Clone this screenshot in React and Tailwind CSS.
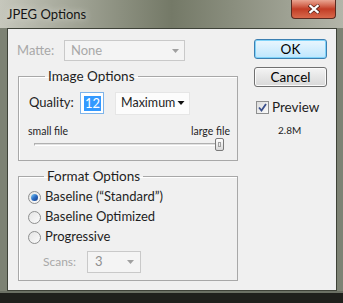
import React from "react";

const font = { fontFamily: 'Lato, "Noto Sans", Arial, sans-serif' };

function Arrow({ color = "#8a8a8a", w = 7 }) {
  return (
    <svg width={w} height="4" viewBox="0 0 7 4">
      <path d="M0 0 L7 0 L3.5 4 Z" fill={color} />
    </svg>
  );
}

function Radio({ checked }) {
  return (
    <span className="w-[13px] h-[13px] rounded-full border border-[#8e8f8f] bg-gradient-to-br from-[#e4e4e4] to-[#fbfbfb] flex items-center justify-center shrink-0">
      {checked && (
        <span className="w-[7px] h-[7px] rounded-full bg-gradient-to-br from-[#8ad4f5] via-[#2c6dc5] to-[#153d84]" />
      )}
    </span>
  );
}

function Legend({ children }) {
  return (
    <legend className="ml-[16px] px-[3px] text-[13.5px] leading-[16px] text-[#1e1e1e]">
      {children}
    </legend>
  );
}

export default function App() {
  return (
    <div
      className="w-[343px] h-[303px] flex flex-col overflow-hidden bg-[#7d8274]"
      style={font}
    >
      {/* title bar */}
      <div className="h-[28px] flex items-start bg-gradient-to-r from-[#c6c7bc] via-[#747967] to-[#b3b5a9]">
        <span className="pl-[7px] pt-[4px] text-[13px] leading-[20px] text-[#151515] [text-shadow:0_0_6px_#e6e6de]">
          JPEG Options
        </span>
        <div className="ml-auto mr-[7px] w-[45px] h-[19px] rounded-b-[4px] border border-t-0 border-[#5a2a20] bg-gradient-to-b from-[#e9a592] via-[#c23c25] to-[#d8684b] flex items-center justify-center">
          <svg width="12" height="10" viewBox="0 0 12 10">
            <path d="M1 1 L11 9 M11 1 L1 9" stroke="#4a1a10" strokeWidth="3.6" />
            <path d="M1.5 1.2 L10.5 8.8 M10.5 1.2 L1.5 8.8" stroke="#ffffff" strokeWidth="2.2" />
          </svg>
        </div>
      </div>

      {/* client area */}
      <div className="flex-1 flex pl-[7px] pr-[6px]">
        <div className="flex-1 flex border border-[#3e4238] bg-[#f0f0f0] text-[#1e1e1e]">
          {/* left column */}
          <div className="w-[230px] pl-[10px] pt-[11px] flex flex-col">
            <div className="flex items-center h-[21px] -ml-[1px]">
              <span className="w-[47px] text-[13px] text-[#a8a8a8]">Matte:</span>
              <div className="w-[121px] h-[21px] border border-[#c9c9c9] bg-[#f4f4f4] flex items-center pl-[6px] pr-[5px]">
                <span className="text-[13px] text-[#a8a8a8]">None</span>
                <span className="ml-auto flex items-center">
                  <Arrow color="#a0a0a0" />
                </span>
              </div>
            </div>

            <fieldset className="mt-[7px] w-[220px] border border-[#a8a8a8] shadow-[inset_1px_1px_0_#ffffff] pl-[10px] pr-[10px] pb-[9px]">
              <Legend>Image Options</Legend>
              <div className="pt-[7px] flex items-center h-[31px]">
                <span className="w-[51px] text-[13px]">Quality:</span>
                <div className="w-[24px] h-[22px] border border-[#7eb4ea] bg-white flex items-center pl-[3px]">
                  <span className="bg-[#3399ff] text-white text-[13px] leading-[15px] px-[1px]">12</span>
                </div>
                <div className="ml-[11px] w-[75px] h-[23px] border border-[#e6e6e6] bg-[#fcfcfc] flex items-center pl-[5px] pr-[4px]">
                  <span className="text-[12.5px]">Maximum</span>
                  <span className="ml-auto flex">
                    <Arrow color="#111111" w={8} />
                  </span>
                </div>
              </div>
              <div className="mt-[10px] h-[12px] flex justify-between items-center text-[10.5px] leading-[12px] -mr-[3px] -ml-[1px]">
                <span>small file</span>
                <span>large file</span>
              </div>
              <div className="h-[14px] flex items-center pl-[5px] pr-[3px]">
                <div className="flex-1 h-[3px] border border-[#b0b0b0] border-b-white bg-[#e2e2e2]" />
                <div className="-ml-[7px] w-[9px] h-[13px] rounded-[2px] border border-[#7a7a7a] bg-gradient-to-b from-[#ffffff] to-[#d9d9d9] flex items-center justify-center">
                  <span className="w-[3px] h-[5px] border border-[#a0a0a0]" />
                </div>
              </div>
            </fieldset>

            <fieldset className="mt-[7px] w-[220px] border border-[#a8a8a8] shadow-[inset_1px_1px_0_#ffffff] pl-[9px] pb-[7px]">
              <Legend>Format Options</Legend>
              <div className="pt-[3px] flex flex-col">
                {[
                  ["Baseline (\u201CStandard\u201D)", true],
                  ["Baseline Optimized", false],
                  ["Progressive", false],
                ].map(([label, checked]) => (
                  <div key={label} className="h-[20px] flex items-center gap-[4px]">
                    <Radio checked={checked} />
                    <span className="text-[13px]">{label}</span>
                  </div>
                ))}
              </div>
              <div className="mt-[4px] flex items-center h-[22px] pl-[15px]">
                <span className="w-[44px] text-[12px] text-[#a8a8a8]">Scans:</span>
                <div className="w-[54px] h-[22px] border border-[#c9c9c9] bg-[#f4f4f4] flex items-center pl-[7px] pr-[6px]">
                  <span className="text-[13px] text-[#8f8f8f]">3</span>
                  <span className="ml-auto flex">
                    <Arrow color="#a0a0a0" />
                  </span>
                </div>
              </div>
            </fieldset>
          </div>

          {/* right column */}
          <div className="pl-[16px] pt-[10px] flex flex-col">
            <button className="w-[73px] h-[20px] rounded-[3px] border border-[#3c7fb1] bg-gradient-to-b from-[#eaf6fd] to-[#bee6fd] shadow-[inset_0_0_0_1px_#7fd3f9] text-[13.5px] leading-[16px] text-black">
              OK
            </button>
            <button className="mt-[8px] w-[73px] h-[20px] rounded-[3px] border border-[#707070] bg-gradient-to-b from-[#f4f4f4] to-[#d8d8d8] shadow-[inset_0_0_0_1px_#fbfbfb] text-[13.5px] leading-[16px] text-black">
              Cancel
            </button>
            <div className="mt-[12px] h-[16px] flex items-center gap-[3px] pl-[2px]">
              <span className="w-[13px] h-[13px] border border-[#8e8f8f] bg-gradient-to-br from-[#dcdcdc] to-[#fbfbfb] flex items-center justify-center">
                <svg width="9" height="9" viewBox="0 0 9 9">
                  <path d="M1 4.5 L3.5 7.5 L8 1" fill="none" stroke="#3a4f8c" strokeWidth="1.8" />
                </svg>
              </span>
              <span className="text-[13.5px]">Preview</span>
            </div>
            <div className="mt-[8px] h-[14px] pl-[24px] text-[10px] leading-[14px]">2.8M</div>
          </div>
        </div>
      </div>

      {/* bottom frame */}
      <div className="h-[12px] flex flex-col">
        <div className="h-[2px] bg-[#6b7064]" />
        <div className="flex-1 bg-[#1f201c]" />
      </div>
    </div>
  );
}
